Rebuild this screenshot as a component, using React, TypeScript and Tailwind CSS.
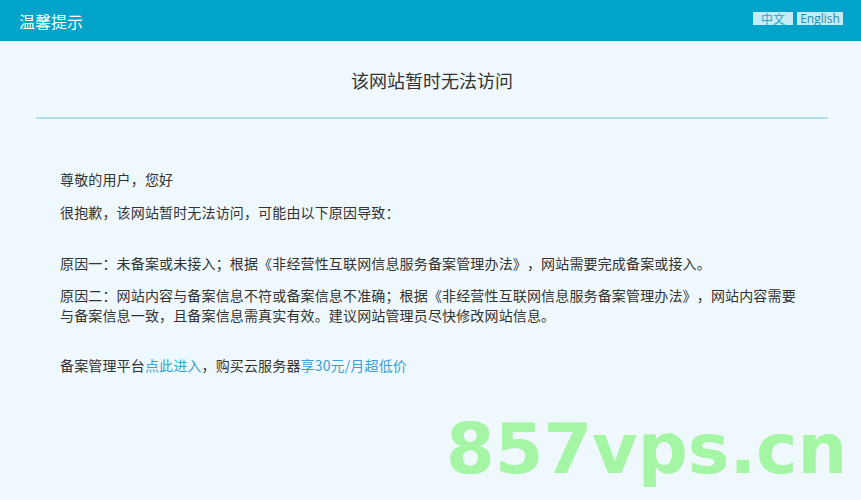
import React from "react";

export default function App() {
  const cjk = { fontFamily: '"Microsoft YaHei", "Noto Sans CJK SC", "Noto Sans", sans-serif' };
  return (
    <div className="relative w-[861px] h-[500px] overflow-hidden bg-[#eff9fd] [text-spacing-trim:space-all]" style={cjk}>
      <div className="h-[41px] bg-[#00a3ca] flex items-center justify-between pl-[19px] pr-[18px]">
        <span className="text-white text-[16px] leading-none">温馨提示</span>
        <div className="flex items-center gap-[4px] mt-[-4px]">
          <span className="bg-[#c5ecf5] text-[#2aa6c8] text-[12px] leading-[13px] w-[40px] text-center">中文</span>
          <span className="bg-[#c5ecf5] text-[#1f8db1] text-[12px] leading-[13px] w-[46px] text-center" style={{ fontFamily: '"Open Sans", "Noto Sans", sans-serif' }}>English</span>
        </div>
      </div>
      <div className="ml-[36px] w-[792px]">
        <div className="pt-[27px] text-center text-[18px] leading-[24px] text-[#333333]">
          该网站暂时无法访问
        </div>
        <div className="mt-[25px] h-[2px] bg-[#aee0e8]" />
        <div className="pl-[24px] w-[768px] text-[14px] leading-[20px] text-[#333333] tracking-[0.15px]">
          <p className="mt-[50px]">尊敬的用户，您好</p>
          <p className="mt-[13px]">很抱歉，该网站暂时无法访问，可能由以下原因导致：</p>
          <p className="mt-[31px]">原因一：未备案或未接入；根据《非经营性互联网信息服务备案管理办法》，网站需要完成备案或接入。</p>
          <p className="mt-[12px] w-[744px]">原因二：网站内容与备案信息不符或备案信息不准确；根据《非经营性互联网信息服务备案管理办法》，网站内容需要与备案信息一致，且备案信息需真实有效。建议网站管理员尽快修改网站信息。</p>
          <p className="mt-[30px]">
            备案管理平台<span className="text-[#3a9fd0]">点此进入</span>，购买云服务器<span className="text-[#3a9fd0]">享30元/月超低价</span>
          </p>
        </div>
      </div>
      <div
        className="absolute left-[446px] top-[404px] text-[70px] leading-[90px] font-bold text-[#a4f5a4] whitespace-nowrap"
        style={{ fontFamily: '"DejaVu Sans", sans-serif' }}
      >
        857vps.cn
      </div>
    </div>
  );
}
